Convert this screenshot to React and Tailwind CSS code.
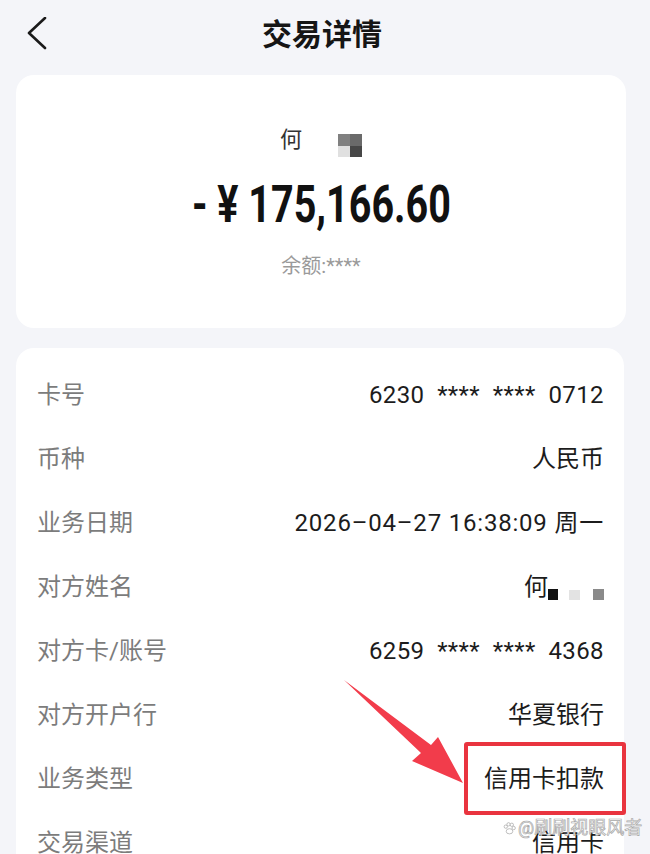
import React from 'react';

const rows = [
        { label: '卡号', value: '6230  ****  ****  0712', track: 'tracking-[0.4px]' },
        { label: '币种', value: '人民币' },
        { label: '业务日期', value: '2026–04–27 16:38:09 周一', track: 'tracking-[0.8px]' },
        { label: '对方姓名', value: 'name' },
        { label: '对方卡/账号', value: '6259  ****  ****  4368', track: 'tracking-[0.4px]' },
        { label: '对方开户行', value: '华夏银行' },
        { label: '业务类型', value: '信用卡扣款', marked: true },
        { label: '交易渠道', value: '信用卡' },
];

const MaskedName = () => (
        <div className="flex items-end">
                <span>何</span>
                <span className="mb-[3px] h-[11px] w-[10px] bg-[#111]" />
                <span className="mb-[3px] ml-[11px] h-[10px] w-[11px] bg-[#e3e3e3]" />
                <span className="mb-[3px] ml-[13px] h-[11px] w-[11px] bg-[#8a8a8a]" />
        </div>
);

export default function App() {
        return (
                <div className="relative h-[854px] w-[650px] overflow-hidden bg-[#f4f5f9] font-['Roboto','Noto_Sans_CJK_SC',sans-serif] text-[#1c1c1c]">
                        {/* Header */}
                        <div className="grid h-[70px] grid-cols-[74px_1fr_80px] items-center">
                                <svg width="22" height="36" viewBox="0 0 22 36" className="ml-[26px]">
                                        <polyline points="19,1 3,16 19,31" fill="none" stroke="#1a1a1a" strokeWidth="2.6" strokeLinecap="round" strokeLinejoin="round" />
                                </svg>
                                <h1 className="text-center text-[30px] font-bold leading-[40px] text-[#151515]">交易详情</h1>
                                <div />
                        </div>

                        {/* Amount card */}
                        <div className="mt-[5px] ml-[16px] mr-[24px] flex flex-col items-center rounded-[18px] bg-white pt-[50px] pb-[49px]">
                                <div className="flex h-[30px] items-center text-[22px] leading-[30px] text-[#333]">
                                        <span>何</span>
                                        <div className="ml-[36px] grid translate-y-[5px] grid-cols-2">
                                                <span className="h-[12px] w-[12px] bg-[#808080]" />
                                                <span className="h-[12px] w-[12px] bg-[#6a6a6a]" />
                                                <span className="h-[11px] w-[12px] bg-[#e0e0e0]" />
                                                <span className="h-[11px] w-[12px] bg-[#474747]" />
                                        </div>
                                </div>
                                <div className="mt-[24px] scale-x-[0.76] whitespace-pre text-[52px] leading-[52px] font-bold text-[#111]">- ¥ 175,166.60</div>
                                <div className="mt-[22px] text-[20px] leading-[26px] text-[#9a9a9a]">余额:****</div>
                        </div>

                        {/* Detail card */}
                        <div className="mt-[20px] ml-[16px] mr-[26px] rounded-[18px] bg-white pt-[15px]">
                                {rows.map((row) => (
                                        <div key={row.label} className="relative flex h-[64px] items-center justify-between pl-[21px] pr-[20px] text-[24px] leading-[32px]">
                                                <span className="text-[#7c7c7c]">{row.label}</span>
                                                {row.value === 'name' ? (
                                                        <MaskedName />
                                                ) : (
                                                        <span className={`whitespace-pre ${row.track || ''}`}>{row.value}</span>
                                                )}
                                                {row.marked && (
                                                        <div className="absolute -top-[5px] -bottom-[4px] -right-[2px] w-[162px] rounded-[3px] border-[4px] border-[#e9343f]" />
                                                )}
                                        </div>
                                ))}
                        </div>

                        {/* Red annotation arrow */}
                        <svg className="pointer-events-none absolute inset-0 z-10" width="650" height="854" viewBox="0 0 650 854">
                                <polygon points="344,680 431,745 438,737 463,783 412,761 421,753" fill="#f23c4b" />
                        </svg>

                        {/* Watermark */}
                        <div className="absolute left-[503px] top-[817px] z-10 flex items-center gap-[2px] text-[18px] leading-[22px] text-white [-webkit-text-stroke:0.7px_#a8a8a8]">
                                <svg width="13" height="13" viewBox="0 0 14 14">
                                        <g fill="#fff" stroke="#a8a8a8" strokeWidth="0.8">
                                                <circle cx="3" cy="5" r="1.8" />
                                                <circle cx="6" cy="2.5" r="1.8" />
                                                <circle cx="9.5" cy="3" r="1.8" />
                                                <circle cx="11.5" cy="6.5" r="1.8" />
                                                <ellipse cx="7" cy="10" rx="3.6" ry="2.8" />
                                        </g>
                                </svg>
                                <span>@刷刷视眼风者</span>
                        </div>
                </div>
        );
}
